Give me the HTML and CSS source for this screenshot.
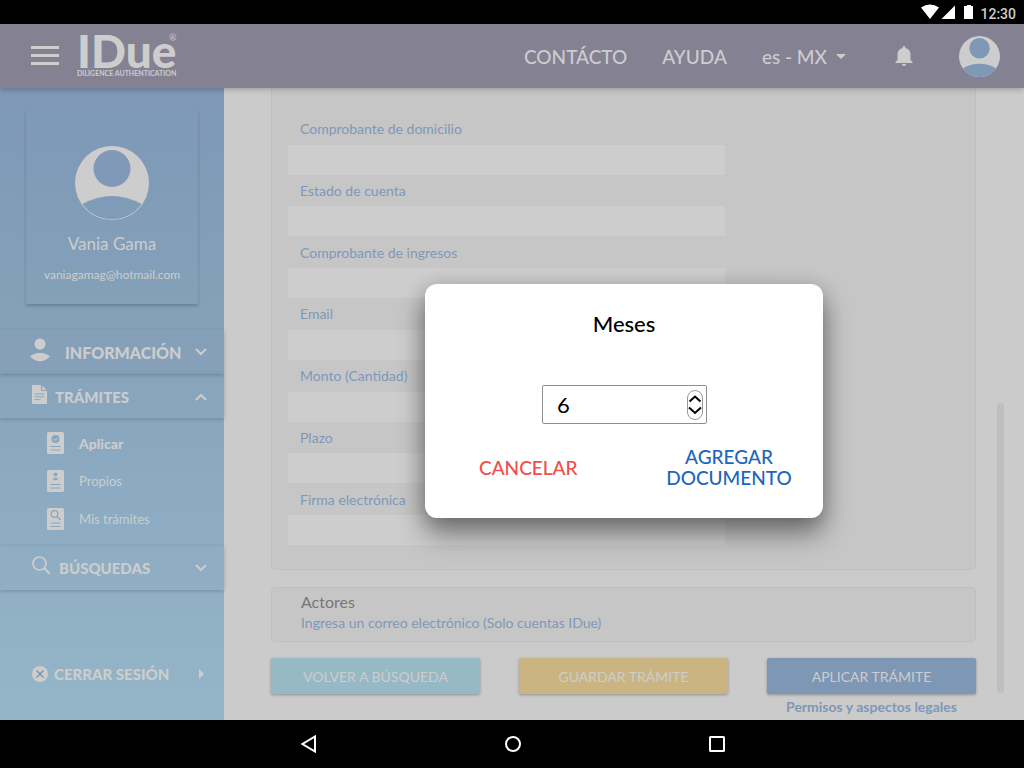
FILE: index.html
```html
<!DOCTYPE html>
<html lang="es-MX">
<head>
<meta charset="utf-8">
<meta name="viewport" content="width=device-width, initial-scale=1">
<title>IDue</title>
<link rel="stylesheet" href="styles.css">
</head>
<body>
<div class="screen">
  <div class="status-bar">
    <svg width="52" height="16" viewBox="0 0 52 16" fill="#fff" aria-hidden="true">
      <path d="M9 15 0 3.500Q9-2.500 18 3.500Z"/>
      <path d="M20.500 15 34 1.500V15Z"/>
      <path d="M43 2h3V1h4v1h2v13h-9Z"/>
    </svg>
    <span class="clock">12:30</span>
  </div>

  <header class="top-bar">
    <button class="icon-button menu-button" aria-label="Menú">
      <svg width="28" height="20" viewBox="0 0 28 20" fill="currentColor"><path d="M0 0h28v3H0zM0 8h28v3H0zM0 16h28v3H0z"/></svg>
    </button>
    <a class="logo" href="#">
      <span class="logo-name">IDue</span>
      <span class="logo-mark">®</span>
      <span class="logo-tag">DILIGENCE AUTHENTICATION</span>
    </a>
    <nav class="top-nav">
      <a href="#">CONTÁCTO</a>
      <a href="#">AYUDA</a>
      <button class="language">es - MX
        <svg width="10" height="5" viewBox="0 0 10 5" fill="currentColor" aria-hidden="true"><path d="M0 0h10L5 5z"/></svg>
      </button>
    </nav>
    <button class="icon-button bell" aria-label="Notificaciones">
      <svg width="18" height="20" viewBox="0 0 18 20" fill="currentColor"><path d="M9 20a2 2 0 0 0 2-2H7a2 2 0 0 0 2 2ZM15.500 14V8.500C15.500 5.300 13.700 2.800 10.500 2V1.500a1.500 1.500 0 0 0-3 0V2C4.300 2.800 2.500 5.300 2.500 8.500V14L.5 16v1h17v-1Z"/></svg>
    </button>
    <button class="icon-button" aria-label="Cuenta">
      <svg width="41" height="41" viewBox="0 0 74 74"><circle cx="37" cy="37" r="37" fill="#cdcdcd"/><circle cx="37" cy="22" r="18.500" fill="#7e98b6"/><path d="M7 58Q37 42 67 58A36 36 0 0 1 7 58Z" fill="#7e98b6"/></svg>
    </button>
  </header>

  <div class="body">
    <aside class="sidebar">
      <section class="profile">
        <svg width="74" height="74" viewBox="0 0 74 74" aria-hidden="true"><circle cx="37" cy="37" r="37" fill="#cdcdcd"/><circle cx="37" cy="22.500" r="18.500" fill="#7f99b6"/><path d="M7.500 58Q37 42 66.500 58A36 36 0 0 1 7.500 58Z" fill="#809bb7"/></svg>
        <p class="profile-name">Vania Gama</p>
        <p class="profile-mail">vaniagamag@hotmail.com</p>
      </section>

      <nav class="side-nav">
        <button class="group group-info">
          <svg class="raised" width="20" height="24" viewBox="0 0 20 24" fill="currentColor" aria-hidden="true"><circle cx="10" cy="6" r="5.500"/><path d="M0 18.500Q10 11 20 18.500 10 28 0 18.500Z"/></svg>
          <span class="group-text">INFORMACIÓN</span>
          <svg class="chevron" width="12" height="8" viewBox="0 0 12 8" aria-hidden="true"><path d="m1 1 5 5 5-5"/></svg>
        </button>
        <button class="group group-open" aria-expanded="true">
          <svg class="raised" width="15" height="19" viewBox="0 0 15 19" aria-hidden="true"><path fill="currentColor" d="M1 0h8v6h6v12a1 1 0 0 1-1 1H1a1 1 0 0 1-1-1V1a1 1 0 0 1 1-1ZM10.200.6 14.500 5h-4.300Z"/><path d="M2.500 9h10M2.500 11.800h10M2.500 14.600h6" stroke="#87a5be"/></svg>
          <span class="group-text">TRÁMITES</span>
          <svg class="chevron" width="12" height="8" viewBox="0 0 12 8" aria-hidden="true"><path d="m1 7 5-5 5 5"/></svg>
        </button>
        <ul class="sub-nav">
          <li><a class="active" href="#">
            <svg width="17" height="22" viewBox="0 0 17 22" aria-hidden="true"><rect width="17" height="22" rx="1.500" fill="#cdcdcd"/><circle cx="8.500" cy="7" r="4" fill="#87a6bf"/><path d="m6.500 7 1.500 1.500 2.800-3" fill="none" stroke="#cdcdcd"/><path d="M3.500 14.500h10M3.500 18h10" stroke="#87a6bf"/></svg>Aplicar</a></li>
          <li><a href="#">
            <svg width="17" height="22" viewBox="0 0 17 22" aria-hidden="true"><rect width="17" height="22" rx="1.500" fill="#cdcdcd"/><circle cx="8.500" cy="4.500" r="2" fill="#89a8c0"/><path d="M5.500 9q3-2.500 6 0-3 2.600-6 0Z" fill="#89a8c0"/><path d="M3.500 14.500h10M3.500 18h10" stroke="#89a8c0"/></svg>Propios</a></li>
          <li><a href="#">
            <svg width="17" height="22" viewBox="0 0 17 22" aria-hidden="true"><rect width="17" height="22" rx="1.500" fill="#cdcdcd"/><g fill="none" stroke="#89a8c0"><circle cx="7.500" cy="6" r="3.300" stroke-width="1.300"/><path d="m10 8.500 3.500 3.500" stroke-width="1.600"/><path d="M3.500 15h10M3.500 18.500h10"/></g></svg>Mis trámites</a></li>
        </ul>
        <button class="group">
          <svg class="raised" width="19" height="19" viewBox="0 0 19 19" fill="none" stroke="currentColor" aria-hidden="true"><circle cx="7.500" cy="7.500" r="6.500" stroke-width="1.700"/><path d="m12.300 12.300 5.500 5.500" stroke-width="2.200"/></svg>
          <span class="group-text">BÚSQUEDAS</span>
          <svg class="chevron" width="12" height="8" viewBox="0 0 12 8" aria-hidden="true"><path d="m1 1 5 5 5-5"/></svg>
        </button>
      </nav>

      <button class="logout">
        <svg width="16" height="16" viewBox="0 0 16 16" aria-hidden="true"><circle cx="8" cy="8" r="8" fill="#cdcdcd"/><path d="m4.500 4.500 7 7m0-7-7 7" stroke="#6f8fb3" stroke-width="1.200"/></svg>
        <span class="logout-text">CERRAR SESIÓN</span>
        <svg width="5" height="10" viewBox="0 0 5 10" fill="currentColor" aria-hidden="true"><path d="m0 0 5 5-5 5z"/></svg>
      </button>
    </aside>

    <main class="main">
      <div class="content">
        <form class="panel form-panel">
          <div class="field"><label for="domicilio">Comprobante de domicilio</label><input id="domicilio" type="text"></div>
          <div class="field"><label for="cuenta">Estado de cuenta</label><input id="cuenta" type="text"></div>
          <div class="field"><label for="ingresos">Comprobante de ingresos</label><input id="ingresos" type="text"></div>
          <div class="field"><label for="email">Email</label><input id="email" type="email"></div>
          <div class="field"><label for="monto">Monto (Cantidad)</label><input id="monto" type="text"></div>
          <div class="field"><label for="plazo">Plazo</label><input id="plazo" type="text"></div>
          <div class="field"><label for="firma">Firma electrónica</label><input id="firma" type="text"></div>
        </form>
        <section class="panel actors">
          <h2>Actores</h2>
          <p>Ingresa un correo electrónico (Solo cuentas IDue)</p>
        </section>
        <div class="actions">
          <button class="action search">VOLVER A BÚSQUEDA</button>
          <button class="action save">GUARDAR TRÁMITE</button>
          <button class="action apply">APLICAR TRÁMITE</button>
          <a class="legal" href="#">Permisos y aspectos legales</a>
        </div>
      </div>
      <div class="rail"><div class="thumb"></div></div>

      <div class="overlay">
        <div class="dialog" role="dialog" aria-labelledby="dialog-title">
          <h1 id="dialog-title">Meses</h1>
          <div class="stepper">
            <input type="number" value="6" aria-labelledby="dialog-title">
            <div class="spin">
              <button aria-label="Más"><svg width="14" height="9" viewBox="0 0 14 9"><path d="m1.500 7.500 5.500-5 5.500 5"/></svg></button>
              <button aria-label="Menos"><svg width="14" height="9" viewBox="0 0 14 9"><path d="m1 1.500 6 5.500 6-5.500"/></svg></button>
            </div>
          </div>
          <div class="dialog-actions">
            <button class="cancel">CANCELAR</button>
            <button class="add">AGREGAR DOCUMENTO</button>
          </div>
        </div>
      </div>
    </main>
  </div>

  <div class="system-nav">
    <button class="icon-button" aria-label="Atrás"><svg width="18" height="20" viewBox="0 0 18 20"><path d="M15 2.500v15L2.500 10Z"/></svg></button>
    <button class="icon-button" aria-label="Inicio"><svg width="18" height="20" viewBox="0 0 18 20"><circle cx="9" cy="10" r="7"/></svg></button>
    <button class="icon-button" aria-label="Recientes"><svg width="18" height="20" viewBox="0 0 18 20"><rect x="2" y="3" width="14" height="14" rx=".5"/></svg></button>
  </div>
</div>
</body>
</html>
```

FILE: styles.css
```css
* { box-sizing: border-box; }

body {
  margin: 0;
  font-family: Lato, "Open Sans", sans-serif;
  font-size: 14px;
  background: #cbcbcb;
}

button, input { font: inherit; }
button { border: 0; padding: 0; background: none; color: inherit; cursor: pointer; }
a { color: inherit; text-decoration: none; }
h1, h2, p, ul { margin: 0; padding: 0; font-weight: 400; }
ul { list-style: none; }
svg { display: block; flex: none; }

.screen { display: flex; flex-direction: column; min-height: 100vh; }

.status-bar {
  display: flex;
  align-items: center;
  justify-content: flex-end;
  gap: 7px;
  height: 24px;
  padding: 0 8px 0 0;
  background: #000;
}
.clock { padding-top: 4px; font: 500 14px/16px Roboto, sans-serif; color: #cdcdcd; }

.top-bar {
  position: relative;
  z-index: 2;
  display: flex;
  align-items: center;
  height: 64px;
  padding: 0 24px 0 31px;
  background: #848193;
  color: #cdcdcd;
  box-shadow: 0 2px 5px rgba(0, 0, 0, .2);
}
.menu-button { margin-right: 18px; }
.logo { position: relative; display: flex; flex-direction: column; padding-bottom: 2px; }
.logo-name { font-size: 46px; font-weight: 900; line-height: 36px; }
.logo-mark { position: absolute; top: 0; right: 0; font-size: 9px; line-height: 9px; }
.logo-tag { font-size: 7px; font-weight: 700; line-height: 8px; }
.top-nav {
  display: flex;
  align-items: center;
  gap: 35px;
  margin-left: auto;
  font-size: 19px;
  font-weight: 500;
}
.language { display: flex; align-items: center; gap: 9px; }
.bell { margin: 0 46px 0 49px; }

.body { display: flex; flex: 1; }

.sidebar {
  display: flex;
  flex-direction: column;
  flex: none;
  width: 224px;
  background: linear-gradient(#7e98b6, #84a1b9 36%, #8ba9c1 60%, #95b5c7);
  color: #cdcdcd;
}
.profile {
  display: flex;
  flex-direction: column;
  align-items: center;
  margin: 22px 26px 26px;
  padding: 36px 0 22px;
  box-shadow: 0 2px 3px rgba(0, 0, 0, .2);
}
.profile-name { margin-top: 14px; font-size: 17px; line-height: 20px; }
.profile-mail { margin-top: 14px; font-size: 12px; line-height: 14px; }

.group {
  display: flex;
  align-items: center;
  width: 100%;
  height: 44px;
  padding: 0 17px 0 32px;
  box-shadow: 0 1px 4px rgba(0, 0, 0, .2);
  text-align: left;
  font-size: 15px;
  font-weight: 900;
}
.group-info { padding-left: 30px; background: rgba(134, 155, 184, .35); font-size: 16px; }
.group-open { padding-top: 2px; }
.group-text { flex: 1; padding-left: 8px; }
.group-info .group-text { padding-left: 15px; }
.raised { margin-bottom: 5px; }
.chevron { fill: none; stroke: currentColor; stroke-width: 2; }

.sub-nav { display: flex; flex-direction: column; gap: 16px; padding: 14px 0 16px 47px; }
.sub-nav a { display: flex; align-items: center; gap: 15px; height: 22px; font-size: 13px; }
.sub-nav .active { font-size: 14px; font-weight: 900; }

.logout {
  display: flex;
  align-items: center;
  margin: auto 20px 37px 32px;
  text-align: left;
  font-size: 15px;
  font-weight: 900;
}
.logout-text { flex: 1; padding-left: 6px; }

.main { position: relative; display: flex; flex: 1; padding-left: 47px; }
.content { display: flex; flex-direction: column; flex: 1; }

.panel { border: 1px solid #bebebe; border-radius: 5px; background: #c6c6c6; }
.form-panel {
  display: grid;
  grid-auto-rows: 1fr;
  flex: 1;
  padding: 25px 250px 24px 16px;
  border-top: 0;
  border-top-left-radius: 0;
  border-top-right-radius: 0;
}
.field { display: flex; flex-direction: column; }
.field label {
  display: flex;
  align-items: center;
  flex: 1;
  padding-left: 12px;
  color: #7e98b9;
}
.field input { height: 30px; border: 0; padding: 0 12px; background: #cdcdcd; }

.actors { margin: 17px 0 16px; padding: 4px 29px 8px; }
.actors h2 { font-size: 16px; line-height: 20px; color: #777; }
.actors p { line-height: 21px; color: #7e98b9; }

.actions { display: grid; grid-template-columns: repeat(3, 1fr); column-gap: 39px; }
.action {
  height: 36px;
  border-radius: 2px;
  box-shadow: 0 1px 3px rgba(0, 0, 0, .3);
  color: #cdcdcd;
}
.search { background: #97b9c5; }
.save { background: #cab582; }
.apply { background: #7e97b5; }
.legal {
  grid-column: 3;
  text-align: center;
  font-size: 14px;
  font-weight: 700;
  line-height: 26px;
  color: #7e97b5;
}

.rail { display: flex; align-items: flex-end; width: 48px; padding: 0 20px 27px 21px; }
.thumb { width: 7px; height: 290px; border-radius: 4px; background: #bebebe; }

.overlay {
  position: absolute;
  inset: 0;
  display: flex;
  align-items: center;
  justify-content: center;
  padding-bottom: 6px;
}
.dialog {
  width: 398px;
  padding: 25px 24px 30px;
  border-radius: 12px;
  background: #fff;
  box-shadow: 0 16px 28px rgba(0, 0, 0, .4), 0 4px 20px rgba(0, 0, 0, .2);
  text-align: center;
}
.dialog h1 { font-size: 22px; font-weight: 500; line-height: 30px; color: #000; }
.stepper {
  display: flex;
  align-items: center;
  width: 165px;
  height: 39px;
  margin: 46px auto 22px 93px;
  padding: 0 3px 0 14px;
  border: 1px solid #8f8f8f;
  border-radius: 2px;
}
.stepper input {
  flex: 1;
  min-width: 0;
  border: 0;
  padding: 0;
  outline: 0;
  background: none;
  font-size: 22px;
  color: #000;
  appearance: textfield;
}
.stepper input::-webkit-inner-spin-button { appearance: none; margin: 0; }
.spin {
  display: flex;
  flex-direction: column;
  align-items: center;
  justify-content: center;
  gap: 3px;
  width: 16px;
  height: 30px;
  border: 1px solid #999;
  border-radius: 8px;
}
.spin path { fill: none; stroke: #000; stroke-width: 2; }
.dialog-actions {
  display: flex;
  align-items: center;
  justify-content: space-between;
  padding: 0 3px 0 30px;
  font-size: 19px;
  font-weight: 500;
  line-height: 21px;
}
.cancel { color: #f04e4a; }
.add { width: 134px; color: #1d66bd; }

.system-nav {
  display: flex;
  align-items: center;
  justify-content: center;
  gap: 186px;
  height: 48px;
  padding-left: 2px;
  background: #000;
}
.system-nav svg { fill: none; stroke: #fff; stroke-width: 2; }
```
